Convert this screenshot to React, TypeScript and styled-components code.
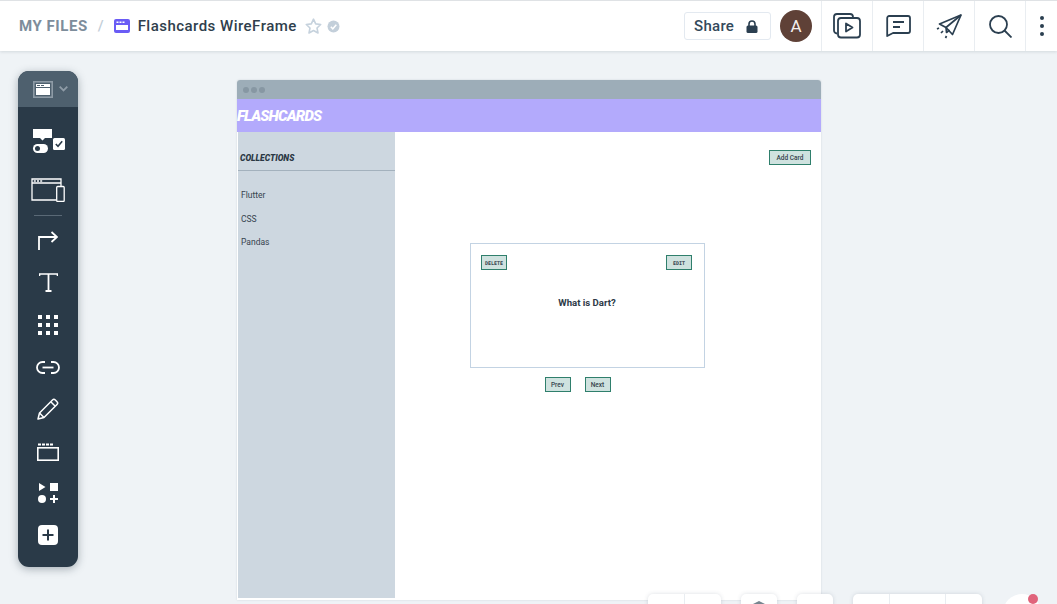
import React from "react";
import styled, { createGlobalStyle } from "styled-components";

const Global = createGlobalStyle`
  html, body {
    margin: 0;
    padding: 0;
    height: 604px;
    overflow: hidden;
    background: #eff3f6;
    font-family: "Roboto", "Liberation Sans", sans-serif;
  }
`;

const Page = styled.div`
  position: relative;
  width: 1057px;
  height: 604px;
  overflow: hidden;
`;

const Header = styled.header`
  position: relative;
  z-index: 2;
  box-sizing: border-box;
  height: 51px;
  display: flex;
  align-items: stretch;
  justify-content: space-between;
  background: #fff;
  border-top: 1px solid #dfe2e5;
  box-shadow: 0 1px 3px rgba(40, 60, 80, 0.14);
`;

const Crumbs = styled.div`
  display: flex;
  align-items: center;
  padding-left: 19px;
`;

const MyFiles = styled.span`
  font-size: 15px;
  font-weight: 700;
  letter-spacing: 0.55px;
  color: #7d8d9b;
`;

const Slash = styled.span`
  margin: 0 10px 0 10px;
  font-size: 15px;
  font-weight: 500;
  color: #c3ced8;
`;

const FileTitle = styled.span`
  margin: 0 8px 0 8px;
  font-size: 15px;
  font-weight: 500;
  letter-spacing: 0.47px;
  color: #2f3e4c;
`;

const RightTools = styled.div`
  display: flex;
  align-items: stretch;
`;

const ShareGroup = styled.div`
  display: flex;
  align-items: center;
  padding-right: 9px;
`;

const ShareButton = styled.div`
  box-sizing: border-box;
  width: 87px;
  height: 28px;
  margin-right: 9px;
  padding: 0 12px 0 9px;
  display: flex;
  align-items: center;
  justify-content: space-between;
  border: 1px solid #e3e9f0;
  border-radius: 3px;
  font-size: 15px;
  font-weight: 500;
  letter-spacing: 0.3px;
  color: #33495b;
`;

const Avatar = styled.div`
  width: 32px;
  height: 32px;
  border-radius: 50%;
  background: #5f4137;
  color: #f4efec;
  font-size: 17px;
  display: flex;
  align-items: center;
  justify-content: center;
`;

const HeadCell = styled.div<{ $w?: number }>`
  box-sizing: border-box;
  width: ${(p) => p.$w ?? 51}px;
  display: flex;
  align-items: center;
  justify-content: center;
  border-left: 1px solid #e9edf1;
`;

const Main = styled.main`
  display: flex;
  align-items: flex-start;
  padding: 20px 0 0 18px;
`;

const Toolbar = styled.aside`
  width: 60px;
  height: 496px;
  flex: none;
  border-radius: 11px;
  overflow: hidden;
  background: #2a3a48;
  box-shadow: 0 2px 8px rgba(30, 45, 60, 0.35);
  display: flex;
  flex-direction: column;
  align-items: center;
`;

const ToolHead = styled.div`
  align-self: stretch;
  box-sizing: border-box;
  height: 36px;
  flex: none;
  margin-bottom: 14px;
  background: #4e606e;
  display: flex;
  align-items: center;
  gap: 6px;
  padding-left: 15px;
`;

const ToolSlot = styled.div<{ $gap?: number }>`
  height: 42px;
  flex: none;
  margin-top: ${(p) => p.$gap ?? 0}px;
  display: flex;
  align-items: center;
  justify-content: center;
`;

const ToolRule = styled.div`
  width: 28px;
  height: 1px;
  flex: none;
  margin-top: 4px;
  background: #5a6976;
`;

const Wire = styled.section`
  box-sizing: border-box;
  width: 584px;
  height: 520px;
  margin: 9px 0 0 159px;
  flex: none;
  background: #fff;
  border-radius: 3px 3px 0 0;
  box-shadow: 0 0 2px rgba(60, 80, 100, 0.2);
  display: flex;
  flex-direction: column;
`;

const TitleBar = styled.div`
  height: 19px;
  flex: none;
  background: #9dadb8;
  border-radius: 3px 3px 0 0;
  display: flex;
  align-items: center;
  gap: 2px;
  padding-left: 6px;
`;

const Dot = styled.span`
  width: 6px;
  height: 6px;
  border-radius: 50%;
  background: #8797a3;
`;

const Brand = styled.div`
  height: 33px;
  flex: none;
  display: flex;
  align-items: center;
  background: #b3aafc;
  color: #fff;
  font-size: 15px;
  font-weight: 900;
  font-style: italic;
  letter-spacing: -0.85px;
`;

const WireBody = styled.div`
  flex: 1;
  display: flex;
  padding: 0 0 2px 1px;
`;

const Collections = styled.nav`
  width: 157px;
  flex: none;
  background: #cdd7e0;
`;

const CollectionsTitle = styled.div`
  box-sizing: border-box;
  height: 39px;
  padding: 20px 0 0 2px;
  border-bottom: 1px solid #a3b1bd;
  font-size: 8.5px;
  line-height: 12px;
  font-weight: 900;
  font-style: italic;
  color: #2a3744;
`;

const CollectionList = styled.ul`
  list-style: none;
  margin: 18px 0 0;
  padding: 0 0 0 3px;
  display: flex;
  flex-direction: column;
  gap: 11.5px;
`;

const CollectionItem = styled.li`
  font-size: 8.5px;
  line-height: 12px;
  color: #36434f;
`;

const Stage = styled.div`
  flex: 1;
  display: flex;
  flex-direction: column;
`;

const StageTop = styled.div`
  display: flex;
  justify-content: flex-end;
  padding: 18px 10px 0 0;
`;

const WireButton = styled.div<{ $w?: number; $mono?: boolean }>`
  box-sizing: border-box;
  width: ${(p) => p.$w ?? 26}px;
  height: 15px;
  display: flex;
  align-items: center;
  justify-content: center;
  background: #cfe2df;
  border: 1px solid #2f7f6c;
  color: #35424d;
  font-family: ${(p) => (p.$mono ? '"DejaVu Sans Mono", monospace' : '"Roboto", sans-serif')};
  font-size: ${(p) => (p.$mono ? 5 : 6.5)}px;
  font-weight: ${(p) => (p.$mono ? 700 : 500)};
  overflow: hidden;
`;

const Card = styled.div`
  box-sizing: border-box;
  width: 235px;
  height: 125px;
  margin: 78px 0 0 75px;
  padding: 11px 12px 0 10px;
  border: 1px solid #c3d3e3;
  display: flex;
  flex-direction: column;
`;

const CardActions = styled.div`
  display: flex;
  justify-content: space-between;
`;

const Question = styled.div`
  margin-top: 27px;
  padding-left: 1px;
  text-align: center;
  font-size: 9.6px;
  line-height: 12px;
  font-weight: 700;
  color: #2d3a47;
`;

const Pager = styled.div`
  width: 235px;
  margin: 9px 0 0 65px;
  display: flex;
  justify-content: center;
  gap: 14px;
`;

const Floating = styled.div`
  position: absolute;
  left: 648px;
  top: 594px;
  display: flex;
  align-items: flex-start;
  gap: 20px;
  z-index: 3;
`;

const FloatGroup = styled.div`
  display: flex;
  height: 20px;
  background: #fff;
  border-radius: 5px 5px 0 0;
  box-shadow: 0 0 4px rgba(60, 80, 100, 0.18);
`;

const FloatCell = styled.div<{ $w: number }>`
  box-sizing: border-box;
  width: ${(p) => p.$w}px;
  display: flex;
  justify-content: center;
  padding-top: 7px;
  & + & {
    border-left: 1px solid #e9edf1;
  }
`;

const HelpBubble = styled.div`
  position: absolute;
  left: 355px;
  top: 0;
  width: 38px;
  height: 38px;
  border-radius: 50%;
  background: #fff;
`;

const HelpDot = styled.div`
  position: absolute;
  left: 380px;
  top: 0;
  width: 10px;
  height: 10px;
  border-radius: 50%;
  background: #e0637b;
`;

const ink = "#2b3f50";

const FileIcon = () => (
  <svg width="16" height="14" viewBox="0 0 16 14">
    <rect width="16" height="14" rx="2" fill="#6a5cf5" />
    <rect x="2" y="6" width="12" height="5" fill="#fff" />
    <rect x="2.500" y="2.500" width="2" height="1.500" fill="#fff" />
    <rect x="5.500" y="2.500" width="2" height="1.500" fill="#fff" />
    <rect x="8.500" y="2.500" width="2" height="1.500" fill="#fff" />
  </svg>
);

const StarIcon = () => (
  <svg width="17" height="16" viewBox="0 0 17 16" fill="none">
    <path d="M8.500 1.200l2.200 4.700 5 .6-3.700 3.500 1 5-4.500-2.500L4 15l1-5L1.300 6.500l5-.6z" stroke="#c6d2dd" strokeWidth="1.600" strokeLinejoin="round" />
  </svg>
);

const VerifiedIcon = () => (
  <svg width="13" height="13" viewBox="0 0 13 13" style={{ marginLeft: 5 }}>
    <circle cx="6.500" cy="6.500" r="6" fill="#c3cfda" />
    <path d="M3.800 6.800l2 2 3.500-4" fill="none" stroke="#fff" strokeWidth="1.500" />
  </svg>
);

const LockIcon = () => (
  <svg width="12" height="13" viewBox="0 0 12 13">
    <path d="M3 6V4a3 3 0 0 1 6 0v2" fill="none" stroke={ink} strokeWidth="1.600" />
    <rect x="0.500" y="5.500" width="11" height="7.500" rx="1.500" fill={ink} />
  </svg>
);

const PlayStackIcon = () => (
  <svg width="28" height="26" viewBox="0 0 28 26" fill="none" stroke={ink} strokeWidth="1.800">
    <path d="M4 20.500a3 3 0 0 1-3-3V4a3 3 0 0 1 3-3h13a3 3 0 0 1 3 3v1" />
    <rect x="5" y="5" width="22" height="19.500" rx="3" />
    <path d="M13 10.500l6.500 4-6.500 4z" strokeLinejoin="round" />
  </svg>
);

const MessageIcon = () => (
  <svg width="25" height="22" viewBox="0 0 25 22" fill="none" stroke={ink} strokeWidth="1.800">
    <path d="M3 1h19a2 2 0 0 1 2 2v13a2 2 0 0 1-2 2H7l-5.800 3V3a2 2 0 0 1 2-2z" strokeLinejoin="round" />
    <path d="M7 7h11M7 12h7" />
  </svg>
);

const PlaneIcon = () => (
  <svg width="26" height="25" viewBox="0 0 26 25" fill="none" stroke={ink} strokeWidth="1.700">
    <path d="M25 1L3.500 10l6.500 3.500L16.500 20.500z" strokeLinejoin="round" />
    <path d="M25 1L10 13.500l.5 5 3-2.500" strokeLinejoin="round" />
    <path d="M1 15l2-1M5 19l2-2M9.500 24l1-2" />
  </svg>
);

const SearchIcon = () => (
  <svg width="23" height="23" viewBox="0 0 23 23" fill="none" stroke={ink} strokeWidth="1.800">
    <circle cx="9.500" cy="9.500" r="8.500" />
    <path d="M15.500 15.500L22.500 22.500" />
  </svg>
);

const MoreIcon = () => (
  <svg width="4" height="20" viewBox="0 0 4 20" fill={ink}>
    <circle cx="2" cy="2" r="2" />
    <circle cx="2" cy="10" r="2" />
    <circle cx="2" cy="18" r="2" />
  </svg>
);

const PickerIcon = () => (
  <svg width="20" height="17" viewBox="0 0 20 17">
    <rect x="0.800" y="0.800" width="18.400" height="15.400" fill="none" stroke="#8e9ba6" strokeWidth="1.600" />
    <rect x="3" y="3" width="14" height="11" fill="#fff" />
    <rect x="3" y="6" width="14" height="1" fill="#4e606e" />
    <rect x="4" y="4" width="3" height="1" fill="#4e606e" />
    <rect x="8" y="4" width="3" height="1" fill="#4e606e" />
  </svg>
);

const ChevronIcon = () => (
  <svg width="9" height="6" viewBox="0 0 9 6" fill="none" stroke="#8e9ba6" strokeWidth="1.800">
    <path d="M.7.700L4.500 4.500 8.300.700" />
  </svg>
);

const WidgetsIcon = () => (
  <svg width="33" height="26" viewBox="0 1 33 26">
    <path d="M1 1h19v9h-7l-2.500 2.500L8 10H1z" fill="#fff" />
    <rect x="1" y="16" width="15" height="9" rx="4.500" fill="#fff" />
    <circle cx="5.500" cy="20.500" r="2.500" fill="#2a3a48" />
    <rect x="21" y="10" width="12" height="12" rx="1.500" fill="#fff" />
    <path d="M23.800 16l2.200 2.300 4.200-5" fill="none" stroke="#2a3a48" strokeWidth="1.600" />
  </svg>
);

const DevicesIcon = () => (
  <svg width="34" height="24" viewBox="0 0 34 24" fill="none" stroke="#fff" strokeWidth="1.300">
    <path d="M25 22H1V1h29v7" />
    <path d="M1 5h29" />
    <rect x="25.700" y="8.500" width="7.500" height="15" rx="1" fill="#2a3a48" />
    <path d="M2.800 3h2M6 3h2M9.200 3h2" strokeWidth="1.600" />
  </svg>
);

const ArrowIcon = () => (
  <svg width="20" height="19" viewBox="0 0 20 19" fill="none" stroke="#fff" strokeWidth="1.800">
    <path d="M1 19V6h18M13.500 1L19 6l-5.500 5" />
  </svg>
);

const TextIcon = () => (
  <svg width="19" height="19" viewBox="0 0 19 19" fill="none" stroke="#fff">
    <path d="M.500 3V1h18v2" strokeWidth="1.600" />
    <path d="M9.500 1v17M6.500 18h6" strokeWidth="1.800" />
  </svg>
);

const GridIcon = () => (
  <svg width="20" height="20" viewBox="0 0 20 20" fill="#fff">
    {[0, 8, 16].flatMap((y) =>
      [0, 8, 16].map((x) => <rect key={`${x}-${y}`} x={x} y={y} width="4" height="4" />)
    )}
  </svg>
);

const LinkIcon = () => (
  <svg width="24" height="13" viewBox="0 0 24 13" fill="none" stroke="#fff" strokeWidth="1.800">
    <path d="M9 1H6.500a5.500 5.500 0 0 0 0 11H9M15 1h2.500a5.500 5.500 0 0 1 0 11H15" />
    <path d="M6.500 6.500h11" />
  </svg>
);

const PencilIcon = () => (
  <svg width="22" height="22" viewBox="0 0 22 22" fill="none" stroke="#fff" strokeWidth="1.500">
    <path d="M1 21l1.500-6L15.500 2a2 2 0 0 1 2.800 0l1.700 1.700a2 2 0 0 1 0 2.800L7 19.500z" strokeLinejoin="round" />
    <path d="M2.500 15l4.500 4.500M14 4l4 4" />
  </svg>
);

const ClapperIcon = () => (
  <svg width="22" height="20" viewBox="0 0 22 20" fill="none" stroke="#fff">
    <rect x="0.800" y="6.800" width="20.400" height="12.400" strokeWidth="1.600" />
    <path d="M1 3.500h15" strokeWidth="2.200" strokeDasharray="3 1" />
  </svg>
);

const ShapesIcon = () => (
  <svg width="20" height="20" viewBox="0 0 20 20" fill="#fff">
    <path d="M1 0l6.500 4L1 8z" />
    <rect x="12" y="0" width="8" height="8" />
    <circle cx="4" cy="16" r="4" />
    <path d="M15 12h2v3h3v2h-3v3h-2v-3h-3v-2h3z" />
  </svg>
);

const AddIcon = () => (
  <svg width="20" height="20" viewBox="0 0 20 20">
    <rect width="20" height="20" rx="4" fill="#fff" />
    <path d="M10 4.500v11M4.500 10h11" stroke="#2a3a48" strokeWidth="2" />
  </svg>
);

const LayersIcon = () => (
  <svg width="12" height="6" viewBox="0 0 12 6">
    <path d="M6 0l6 3v3H0V3z" fill="#76858f" />
  </svg>
);

export default function App() {
  return (
    <Page>
      <Global />
      <Header>
        <Crumbs>
          <MyFiles>MY FILES</MyFiles>
          <Slash>/</Slash>
          <FileIcon />
          <FileTitle>Flashcards WireFrame</FileTitle>
          <StarIcon />
          <VerifiedIcon />
        </Crumbs>
        <RightTools>
          <ShareGroup>
            <ShareButton>
              Share
              <LockIcon />
            </ShareButton>
            <Avatar>A</Avatar>
          </ShareGroup>
          <HeadCell><PlayStackIcon /></HeadCell>
          <HeadCell><MessageIcon /></HeadCell>
          <HeadCell><PlaneIcon /></HeadCell>
          <HeadCell><SearchIcon /></HeadCell>
          <HeadCell $w={32}><MoreIcon /></HeadCell>
        </RightTools>
      </Header>
      <Main>
        <Toolbar>
          <ToolHead>
            <PickerIcon />
            <ChevronIcon />
          </ToolHead>
          <ToolSlot><WidgetsIcon /></ToolSlot>
          <ToolSlot $gap={6}><DevicesIcon /></ToolSlot>
          <ToolRule />
          <ToolSlot $gap={3}><ArrowIcon /></ToolSlot>
          <ToolSlot><TextIcon /></ToolSlot>
          <ToolSlot $gap={1}><GridIcon /></ToolSlot>
          <ToolSlot><LinkIcon /></ToolSlot>
          <ToolSlot><PencilIcon /></ToolSlot>
          <ToolSlot><ClapperIcon /></ToolSlot>
          <ToolSlot><ShapesIcon /></ToolSlot>
          <ToolSlot><AddIcon /></ToolSlot>
        </Toolbar>
        <Wire>
          <TitleBar>
            <Dot />
            <Dot />
            <Dot />
          </TitleBar>
          <Brand>FLASHCARDS</Brand>
          <WireBody>
            <Collections>
              <CollectionsTitle>COLLECTIONS</CollectionsTitle>
              <CollectionList>
                <CollectionItem>Flutter</CollectionItem>
                <CollectionItem>CSS</CollectionItem>
                <CollectionItem>Pandas</CollectionItem>
              </CollectionList>
            </Collections>
            <Stage>
              <StageTop>
                <WireButton $w={42}>Add Card</WireButton>
              </StageTop>
              <Card>
                <CardActions>
                  <WireButton $mono>DELETE</WireButton>
                  <WireButton $mono>EDIT</WireButton>
                </CardActions>
                <Question>What is Dart?</Question>
              </Card>
              <Pager>
                <WireButton>Prev</WireButton>
                <WireButton>Next</WireButton>
              </Pager>
            </Stage>
          </WireBody>
        </Wire>
      </Main>
      <Floating>
        <FloatGroup>
          <FloatCell $w={36} />
          <FloatCell $w={37} />
        </FloatGroup>
        <FloatGroup>
          <FloatCell $w={36}>
            <LayersIcon />
          </FloatCell>
        </FloatGroup>
        <FloatGroup>
          <FloatCell $w={36} />
        </FloatGroup>
        <FloatGroup>
          <FloatCell $w={36} />
          <FloatCell $w={56} />
          <FloatCell $w={37} />
        </FloatGroup>
        <HelpBubble />
        <HelpDot />
      </Floating>
    </Page>
  );
}
